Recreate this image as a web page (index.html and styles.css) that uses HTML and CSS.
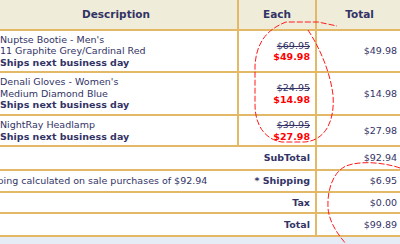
FILE: index.html
```html
<!DOCTYPE html>
<html lang="en">
<head>
    <meta charset="UTF-8">
    <title>Shopping Cart</title>
    <link rel="stylesheet" href="styles.css">
</head>
<body>
    <div class="cart">
        <table class="cart-table">
            <colgroup>
                <col class="col-desc">
                <col class="col-each">
                <col class="col-total">
            </colgroup>
            <thead>
                <tr>
                    <th>Description</th>
                    <th>Each</th>
                    <th class="last">Total</th>
                </tr>
            </thead>
            <tbody>
                <tr class="item">
                    <td class="desc">
                        Nuptse Bootie - Men's<br>
                        11 Graphite Grey/Cardinal Red<br>
                        <strong>Ships next business day</strong>
                    </td>
                    <td class="each">
                        <span class="old-price">$69.95</span><br>
                        <span class="sale-price">$49.98</span>
                    </td>
                    <td class="amount">$49.98</td>
                </tr>
                <tr class="item item-2">
                    <td class="desc">
                        Denali Gloves - Women's<br>
                        Medium Diamond Blue<br>
                        <strong>Ships next business day</strong>
                    </td>
                    <td class="each">
                        <span class="old-price">$24.95</span><br>
                        <span class="sale-price">$14.98</span>
                    </td>
                    <td class="amount">$14.98</td>
                </tr>
                <tr class="item item-short">
                    <td class="desc">
                        NightRay Headlamp<br>
                        <strong>Ships next business day</strong>
                    </td>
                    <td class="each">
                        <span class="old-price">$39.95</span><br>
                        <span class="sale-price">$27.98</span>
                    </td>
                    <td class="amount">$27.98</td>
                </tr>
                <tr class="summary sum-1">
                    <td class="note"></td>
                    <td class="label">SubTotal</td>
                    <td class="amount">$92.94</td>
                </tr>
                <tr class="summary sum-2">
                    <td class="note"><span class="note-text">* Shipping calculated on sale purchases of $92.94</span></td>
                    <td class="label">* Shipping</td>
                    <td class="amount">$6.95</td>
                </tr>
                <tr class="summary sum-3">
                    <td class="note"></td>
                    <td class="label">Tax</td>
                    <td class="amount">$0.00</td>
                </tr>
                <tr class="summary sum-4">
                    <td class="note"></td>
                    <td class="label">Total</td>
                    <td class="amount">$99.89</td>
                </tr>
            </tbody>
        </table>
    </div>

    <!-- hand-drawn marks over the cart -->
    <svg class="marks" width="400" height="244" viewBox="0 0 400 244">
        <path d="M308,30 C318,45 330,70 333,95 C335,120 326,140 305,142 L282,142 C266,140 255,126 255,105 L255,66 C256,45 265,30 286,22 L318,22 L337,26"/>
        <path d="M400,168 C386,163 361,160 346,166 C333,172 327,190 328,208 C329,222 338,235 347,245"/>
    </svg>
</body>
</html>
```

FILE: styles.css
```css
body {
    margin: 0;
    padding: 0;
    background-color: #e6ecf6;
    font-family: "DejaVu Sans", Verdana, sans-serif;
    font-size: 9.5px;
    color: #333366;
    overflow: hidden;
}

.cart {
    margin-left: -7px;
    width: 409px;
}

.cart-table {
    width: 409px;
    border-collapse: collapse;
    table-layout: fixed;
    background-color: #fff;
}

.col-desc {
    width: 244px;
}

.col-each {
    width: 78px;
}

.col-total {
    width: 87px;
}

.cart-table th,
.cart-table td {
    border: 2px solid #e3b866;
    padding: 0 5px;
    line-height: 11.5px;
}

.cart-table th {
    border-top: none;
    height: 29px;
    background-color: #efedd9;
    font-size: 10.5px;
    font-weight: bold;
    text-align: center;
    vertical-align: middle;
}

.cart-table td {
    vertical-align: middle;
}

.item td {
    height: 40px;
}

.item-2 td {
    height: 41px;
}

.item-short td {
    height: 29px;
}

.each {
    text-align: right;
}

.old-price {
    text-decoration: line-through;
}

.sale-price {
    color: #ff0000;
    font-weight: bold;
}

.amount {
    text-align: right;
}

.summary td {
    height: 21px;
}

.sum-1 td {
    height: 22px;
}

.sum-2 td {
    height: 20px;
}

.sum-3 td {
    height: 19px;
}

.summary td.note {
    border-right: none;
    white-space: nowrap;
}

.note-text {
    margin-left: -31px;
}

.summary td.label {
    border-left: none;
    text-align: right;
    font-weight: bold;
    white-space: nowrap;
}

.marks {
    position: absolute;
    top: 0;
    left: 0;
    pointer-events: none;
}

.marks path {
    fill: none;
    stroke: #ff1a1a;
    stroke-width: 1;
    stroke-dasharray: 6 2;
}
```
